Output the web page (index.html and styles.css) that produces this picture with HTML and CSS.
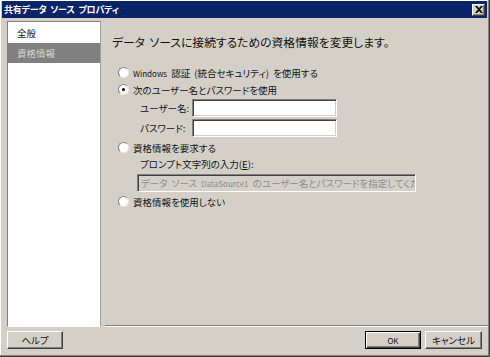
FILE: index.html
```html
<!DOCTYPE html>
<html lang="ja">
<head>
<meta charset="utf-8">
<title>共有データ ソース プロパティ</title>
<link rel="stylesheet" href="styles.css">
</head>
<body>
<div class="window">
  <div class="titlebar">
    <span class="title">共有データ ソース プロパティ</span>
    <span class="close">
      <svg width="8" height="7" viewBox="0 0 8 7"><path d="M0 0h2l2 2 2-2h2L5 3.5 8 7H6L4 5 2 7H0l3-3.5z" fill="#000"/></svg>
    </span>
  </div>
  <div class="content">
    <div class="sidebar">
      <div class="nav-item">全般</div>
      <div class="nav-item selected">資格情報</div>
    </div>
    <div class="main">
      <div class="pane">
        <h1 class="heading">データ ソースに接続するための資格情報を変更します。</h1>
        <div class="radio-row"><span class="radio"></span><span><span class="latin">Windows</span> 認証 (統合セキュリティ) を使用する</span></div>
        <div class="radio-row"><span class="radio checked"></span><span>次のユーザー名とパスワードを使用</span></div>
        <div class="field-row"><span class="field-label">ユーザー名:</span><span class="textbox"></span></div>
        <div class="field-row"><span class="field-label">パスワード:</span><span class="textbox"></span></div>
        <div class="radio-row gap"><span class="radio"></span><span>資格情報を要求する</span></div>
        <div class="prompt-label">プロンプト文字列の入力(<u>E</u>):</div>
        <div class="textbox disabled">データ ソース <span class="latin">DataSource1</span> のユーザー名とパスワードを指定してくだ</div>
        <div class="radio-row gap"><span class="radio"></span><span>資格情報を使用しない</span></div>
      </div>
      <div class="separator"></div>
    </div>
  </div>
  <div class="footer">
    <span class="button">ヘルプ</span>
    <span class="spacer"></span>
    <span class="button default"><span class="latin">OK</span></span>
    <span class="button">キャンセル</span>
  </div>
</div>
</body>
</html>
```

FILE: styles.css
```css
html, body {
  margin: 0;
  padding: 0;
  background: #d4d0c8;
}

body {
  font-family: "Noto Sans CJK JP", "Noto Sans", sans-serif;
  font-feature-settings: "palt";
  font-size: 9.5px;
  color: #111;
  word-spacing: 2px;
}

.latin {
  font-size: 8px;
}

.window {
  width: 490px;
  height: 357px;
  box-sizing: border-box;
  padding: 1px 1px 0 2px;
  background: #d4d0c8;
  border-right: 1px solid #404040;
  border-bottom: 1px solid #404040;
  box-shadow: inset -1px -1px 0 #808080, inset 1px 1px 0 #ffffff;
  display: flex;
  flex-direction: column;
}

.titlebar {
  height: 17px;
  background: #0a246a;
  display: flex;
  align-items: center;
  justify-content: space-between;
  padding: 0 2px 0 2px;
  margin-right: 1px;
}

.title {
  color: #fff;
  font-weight: bold;
  font-size: 9px;
  letter-spacing: -0.2px;
  line-height: 17px;
}

.close {
  width: 11px;
  height: 10px;
  background: #d4d0c8;
  border-top: 1px solid #fff;
  border-left: 1px solid #fff;
  border-right: 1px solid #404040;
  border-bottom: 1px solid #404040;
  box-shadow: inset -1px -1px 0 #808080;
  display: flex;
  align-items: center;
  justify-content: center;
}

.content {
  display: flex;
  height: 306px;
  margin: 3px 0 0 5px;
}

.sidebar {
  box-sizing: border-box;
  width: 94px;
  background: #fff;
  border-top: 1px solid #808080;
  border-left: 1px solid #808080;
  border-right: 1px solid #a0a0a0;
  border-bottom: 1px solid #fff;
  padding: 1px 0 0 0;
}

.nav-item {
  height: 20px;
  line-height: 20px;
  padding-left: 9px;
}

.nav-item.selected {
  background: #808080;
  color: #d8d8d8;
}

.main {
  flex: 1;
  display: flex;
  flex-direction: column;
}

.pane {
  flex: 1;
  padding: 13px 0 0 11px;
}

.heading {
  margin: 0 0 14px 0;
  font-size: 11.8px;
  font-weight: normal;
  line-height: 16px;
  height: 16px;
}

.radio-row {
  height: 17px;
  display: flex;
  align-items: center;
  gap: 4px;
  padding-left: 6px;
}

.radio-row.gap {
  margin-top: 1px;
}

.radio {
  width: 9px;
  height: 9px;
  border-radius: 50%;
  background: #fff;
  border-top: 1px solid #808080;
  border-left: 1px solid #808080;
  border-right: 1px solid #e8e8e8;
  border-bottom: 1px solid #e8e8e8;
  position: relative;
  flex: none;
}

.radio.checked::after {
  content: "";
  position: absolute;
  left: 3px;
  top: 3px;
  width: 3px;
  height: 3px;
  border-radius: 50%;
  background: #000;
}

.field-row {
  height: 20px;
  display: flex;
  align-items: center;
  padding-left: 28px;
}

.field-label {
  width: 52px;
}

.textbox {
  display: block;
  box-sizing: border-box;
  width: 145px;
  height: 18px;
  background: #fff;
  border-top: 1px solid #808080;
  border-left: 1px solid #808080;
  border-right: 1px solid #fff;
  border-bottom: 1px solid #fff;
  box-shadow: inset 1px 1px 0 #404040, inset -1px -1px 0 #d4d0c8;
}

.prompt-label {
  height: 17px;
  line-height: 17px;
  padding-left: 28px;
}

.textbox.disabled {
  width: 279px;
  margin: 1px 0 0 25px;
  background: #d4d0c8;
  color: #8c8c8c;
  white-space: nowrap;
  overflow: hidden;
  padding: 0 3px;
  line-height: 16px;
}

.separator {
  margin-left: 4px;
  border-top: 1px solid #808080;
  border-bottom: 1px solid #fff;
}

.footer {
  flex: 1;
  display: flex;
  align-items: flex-start;
  gap: 4px;
  padding: 4px 6px 0 5px;
}

.spacer {
  flex: 1;
}

.button {
  box-sizing: border-box;
  width: 56px;
  height: 18px;
  display: flex;
  align-items: center;
  justify-content: center;
  background: #d4d0c8;
  border-top: 1px solid #fff;
  border-left: 1px solid #fff;
  border-right: 1px solid #404040;
  border-bottom: 1px solid #404040;
  box-shadow: inset -1px -1px 0 #808080;
}

.button:last-child {
  width: 57px;
}

.button.default {
  border: 1px solid #000;
  box-shadow: inset 1px 1px 0 #fff, inset -1px -1px 0 #404040, inset -2px -2px 0 #808080;
}
```
